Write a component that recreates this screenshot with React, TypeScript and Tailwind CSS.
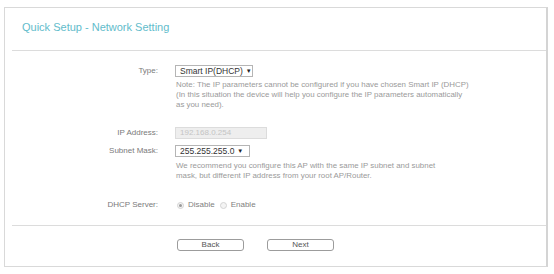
const labelCls = 'w-[153px] shrink-0 text-right text-[8px] text-[#7a7a7a]';

const Select = ({ value, width }: { value: string; width: string }) => (
  <div className={`${width} h-[12px] border border-[#b5b5b5] flex items-center pl-[4px] text-[8.5px] text-[#333] bg-white`}>
    <span>{value}</span>
    <span className="ml-[3px] text-[6px] text-[#222]">▼</span>
  </div>
);

const Radio = ({ checked, label }: { checked?: boolean; label: string }) => (
  <label className="flex items-center gap-[4px]">
    <span className="w-[7px] h-[7px] rounded-full border border-[#d4d4d4] bg-[#f4f4f4] flex items-center justify-center">
      {checked && <span className="w-[3px] h-[3px] rounded-full bg-[#9a9a9a]" />}
    </span>
    <span>{label}</span>
  </label>
);

export default function App() {
  return (
    <div className="w-[554px] h-[274px] bg-white pt-[7px] pl-[4px] font-['Liberation_Sans',Arial,sans-serif]">
      <div className="w-[544px] h-[260px] border border-[#d9d9d9] border-r-2 border-r-[#d4d4d4] flex flex-col">
        <div className="h-[42px] flex items-center pl-[17px] pb-[4px] text-[11px] text-[#62bccb]">
          Quick Setup - Network Setting
        </div>
        <div className="ml-[7px] h-px bg-[#dcdcdc]" />

        <div className="flex items-center mt-[14px] h-[12px]">
          <div className={labelCls}>Type:</div>
          <div className="ml-[17px]">
            <Select value="Smart IP(DHCP)" width="w-[78px]" />
          </div>
        </div>
        <div className="ml-[171px] mt-[3px] text-[7.9px] leading-[10px] text-[#9a9a9a]">
          Note: The IP parameters cannot be configured if you have chosen Smart IP (DHCP)
          <br />
          (In this situation the device will help you configure the IP parameters automatically
          <br />
          as you need).
        </div>

        <div className="flex items-center mt-[17px] h-[12px]">
          <div className={labelCls}>IP Address:</div>
          <div className="ml-[17px] w-[92px] h-[12px] border border-[#dcdcdc] bg-[#eeeeee] flex items-center pl-[4px] text-[8px] text-[#c4c4c4]">
            192.168.0.254
          </div>
        </div>

        <div className="flex items-center mt-[6px] h-[12px]">
          <div className={labelCls}>Subnet Mask:</div>
          <div className="ml-[17px]">
            <Select value="255.255.255.0" width="w-[75px]" />
          </div>
        </div>
        <div className="ml-[171px] mt-[4px] text-[7.9px] leading-[10px] text-[#9a9a9a]">
          We recommend you configure this AP with the same IP subnet and subnet
          <br />
          mask, but different IP address from your root AP/Router.
        </div>

        <div className="flex items-center mt-[18px] h-[12px]">
          <div className={labelCls}>DHCP Server:</div>
          <div className="ml-[19px] flex items-center gap-[5px] text-[8px] text-[#808080]">
            <Radio checked label="Disable" />
            <Radio label="Enable" />
          </div>
        </div>

        <div className="ml-[7px] mt-[14px] h-px bg-[#dcdcdc]" />

        <div className="flex mt-[13px] ml-[172px] gap-[23px]">
          <button className="w-[67px] h-[12px] rounded-[3px] border border-[#9c9c9c] bg-white text-[8px] text-[#555] leading-none">
            Back
          </button>
          <button className="w-[67px] h-[12px] rounded-[3px] border border-[#9c9c9c] bg-white text-[8px] text-[#555] leading-none">
            Next
          </button>
        </div>
      </div>
    </div>
  );
}
